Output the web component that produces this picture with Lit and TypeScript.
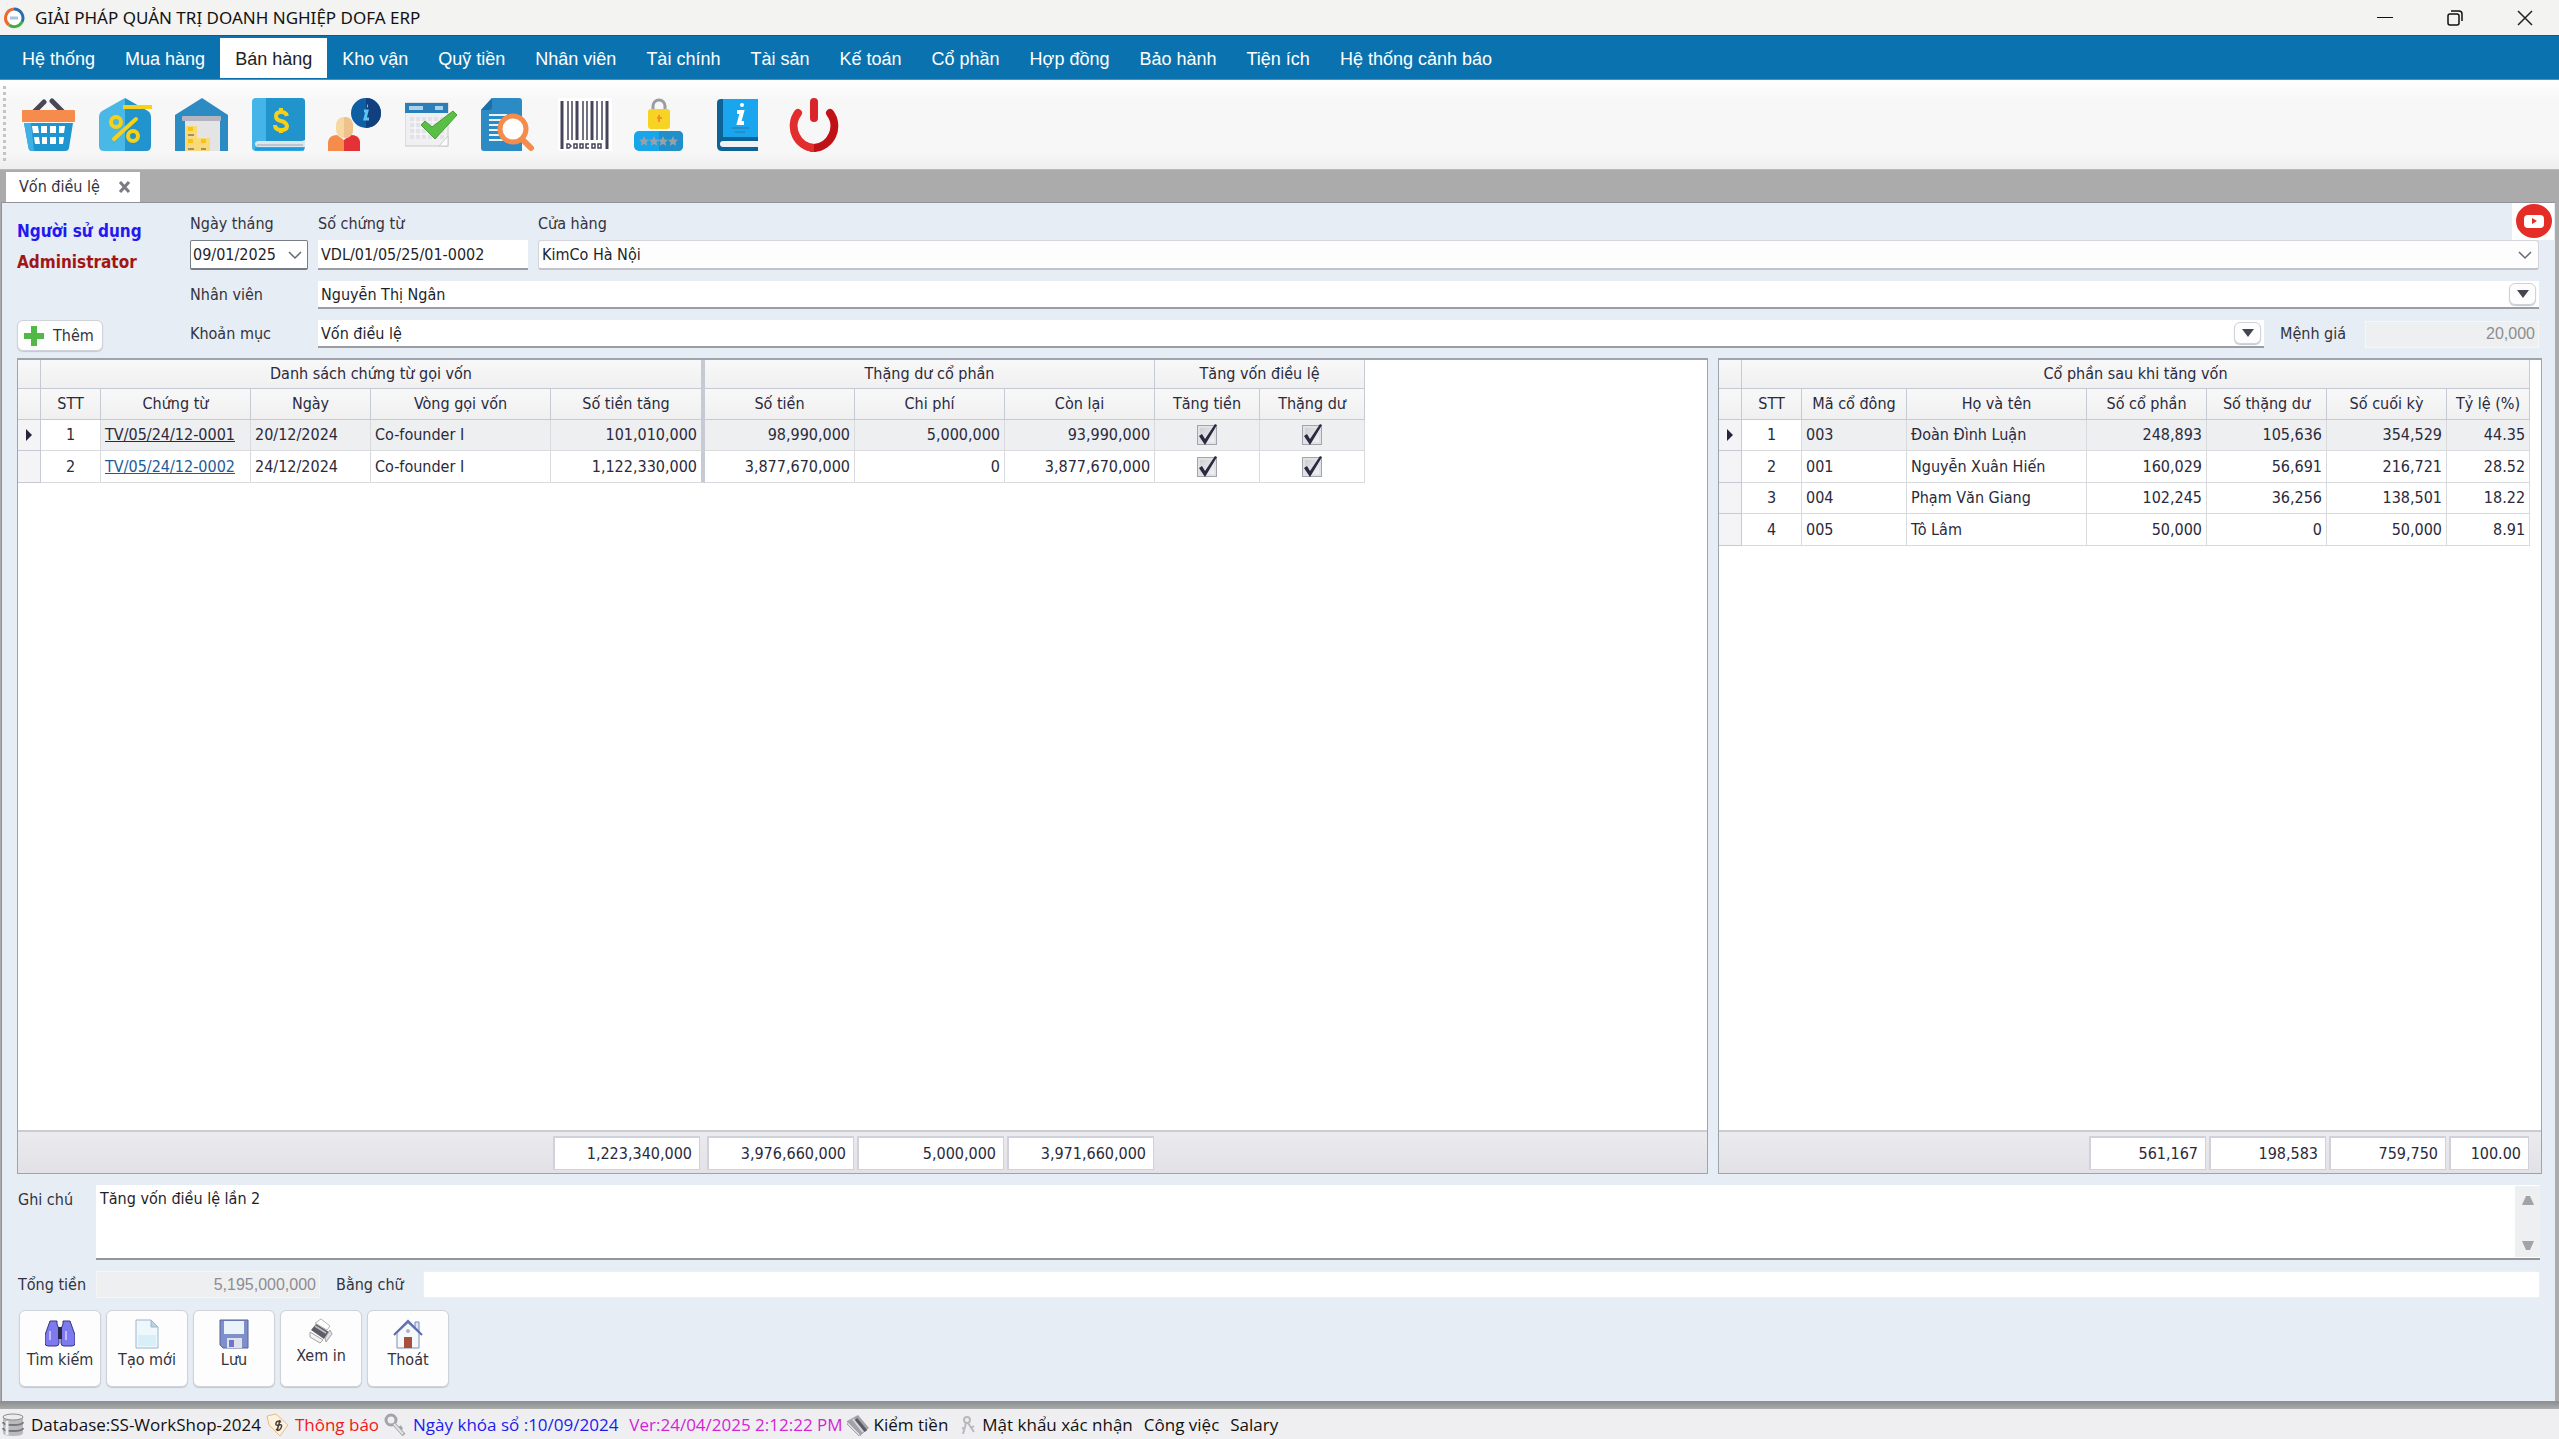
import { LitElement, html, css, svg, nothing } from "lit";
import { customElement } from "lit/decorators.js";
import { classMap } from "lit/directives/class-map.js";

/* ---------- toolbar icons, each on a 54 x 54 canvas ---------- */

const star = (x: number) => svg`<path d="M0-5 1.5-1.6 5-1.2 2.4 1.2 3.2 4.8 0 3-3.2 4.8-2.4 1.2-5-1.2-1.5-1.6z" transform="translate(${x} 43)" fill="#98a0aa"/>`;

const tools = [
  {
    name: "Bán hàng",
    art: svg`
      <path d="M22 4 12 14M30 3l11 11" stroke="#4b4558" stroke-width="5" stroke-linecap="round"/>
      <path d="M2 25h49l-4 25q-.500 3-4 3H10q-3 0-3.500-3z" fill="#1f95d0"/>
      <path d="M2 25h7l3 28h-2q-3 0-3.500-3z" fill="#3fb0e4"/>
      <rect y="12" width="53" height="12" rx="1" fill="#f58c4b"/>
      <path d="M10 28h6l1 7h-6zM19 28h6v7h-6zM28 28h6v7h-6zM37 28h6l-1 7h-5zM12 39h5l1 7h-5zM20 39h5v7h-5zM28 39h6v7h-6zM37 39h5l-1 7h-4z" fill="#fff"/>`,
  },
  {
    name: "Khuyến mại",
    art: svg`
      <path d="M26 0v53H5q-5 0-5-5V18q0-3 3-5z" fill="#4ab8e6"/>
      <path d="M26 0l23 13q3 2 3 5v30q0 5-5 5H26z" fill="#2194cd"/>
      <path d="M24 9h29" stroke="#f7d117" stroke-width="4"/>
      <g fill="none" stroke="#f7d117" stroke-width="4" stroke-linecap="round">
        <circle cx="17" cy="24" r="5"/><circle cx="34" cy="38" r="5"/><path d="M37 21 15 41"/>
      </g>`,
  },
  {
    name: "Kho",
    art: svg`
      <path d="M0 17 27 0l26 17v36H0z" fill="#2d8bc4"/>
      <rect x="10" y="22" width="35" height="31" fill="#e4e4e4"/>
      <rect x="7" y="18" width="39" height="5" rx="1" fill="#b4b5c0"/>
      <path d="M10 28h12v12h13v13H10z" fill="#f9d97a"/>
      <path d="M13 29h5v4h-5zM13 41h5v4h-5zM26 41h5v4h-5z" fill="#f7c211"/>
      <path d="M13 37h6M13 51h6M26 51h5" stroke="#a08f72" stroke-width="2"/>`,
  },
  {
    name: "Sổ quỹ",
    art: svg`
      <rect width="53" height="53" rx="4" fill="#45b4e8"/>
      <path d="M14 0h35q4 0 4 4v39H14z" fill="#2194cb"/>
      <path d="M53 42v7H7q-4 0-4-3t4-3h43z" fill="#dfe5ec"/>
      <path d="M5 47h46" stroke="#b9c6d4" stroke-width="2"/>
      <path d="M3 51h49" stroke="#1a9cdc" stroke-width="3"/>
      <path d="M35 18q-1-4-6-4t-5 4q0 4 5 5t6 5q0 4-6 4t-6-5M29 10v5M29 31v4" fill="none" stroke="#f7d117" stroke-width="4"/>`,
  },
  {
    name: "Khách hàng",
    art: svg`
      <circle cx="38" cy="15" r="15" fill="#0e5ea4"/>
      <path d="M38 0a15 15 0 0 1 0 30z" fill="#12407f"/>
      <path d="M36 13h3l-2 8h4M39 8h1" fill="none" stroke="#5fc4ef" stroke-width="3"/>
      <path d="M0 53V44q1-7 9-7l7 5 7-5q8 0 9 7v9z" fill="#f58c4b"/>
      <path d="M16 42l7-5q8 0 9 7v9H16z" fill="#e43136"/>
      <rect x="8" y="19" width="17" height="21" rx="8" fill="#f6d8a4"/>
      <path d="M16 19q9 0 9 9v4q0 8-9 8z" fill="#eec28a"/>`,
  },
  {
    name: "Lịch",
    art: svg`
      <rect x="0" y="5" width="43" height="43" fill="#f0f0f3" stroke="#c9c9d0"/>
      <path d="M0 5h43v10H0z" fill="#2a7fb8"/>
      <path d="M4 10h14M30 10h8" stroke="#a8d2ec" stroke-width="4"/>
      <path d="M5 19h34v22H5z" fill="#e2e2e8"/>
      <path d="M10 19v22M16 19v22M22 19v22M28 19v22M34 19v22M5 24h34M5 30h34M5 36h34" stroke="#fff"/>
      <path d="M34 48l9-10v10z" fill="#fff" stroke="#c9c9d0"/>
      <path d="M16 27l4-4 7 6L48 13l4 4-22 24z" fill="#5abf45" stroke="#4a9d3c"/>`,
  },
  {
    name: "Tra cứu",
    art: svg`
      <path d="M11 0h27q3 0 3 3v50H3q-3 0-3-3V12z" fill="#2c8bc4"/>
      <path d="M11 0v9q0 3-3 3H0z" fill="#1d6fa8"/>
      <path d="M8 17h18M8 22h12M8 27h10M8 32h10M8 37h10M8 42h18" stroke="#e9f3fb" stroke-width="2"/>
      <path d="M41 41l9 9" stroke="#f58c4b" stroke-width="6" stroke-linecap="round"/>
      <circle cx="32" cy="31" r="13" fill="#fff" stroke="#f58c4b" stroke-width="5"/>`,
  },
  {
    name: "Mã vạch",
    art: svg`
      <path d="M0 0h54v53H0z" fill="#fff"/>
      <path d="M4 3v48M49 3v48" stroke="#46445a" stroke-width="3"/>
      <path d="M19 3v39M34 3v39" stroke="#46445a" stroke-width="3"/>
      <path d="M10 3v39M14 3v39M25 3v39M29 3v39M39 3v39M44 3v39" stroke="#46445a" stroke-width="1.500"/>
      <path d="M9 46h2l2 2-2 2H9zM16 46h3v4h-3zM22 46h3v4h-3zM31 46h-3v4h3M34 46h3v4h-3zM40 46h3v4h-3z" fill="none" stroke="#46445a" stroke-width="1.500"/>`,
  },
  {
    name: "Mật khẩu",
    art: svg`
      <path d="M19 12V8a6 6 0 0 1 12 0v4" fill="none" stroke="#9b9ca3" stroke-width="3"/>
      <rect x="14" y="11" width="22" height="20" rx="3" fill="#f7d424"/>
      <path d="M25 17v7M23 20h5" stroke="#f58c2b" stroke-width="2"/>
      <rect y="33" width="49" height="20" rx="5" fill="#19a5ea"/>
      <path d="M25 33h19q5 0 5 5v10q0 5-5 5H25z" fill="#2190ca"/>
      ${star(10)}${star(20)}${star(29)}${star(39)}`,
  },
  {
    name: "Hướng dẫn",
    art: svg`
      <path d="M10 1h37v52H11q-5 0-5-5V5q0-4 4-4z" fill="#0d6296"/>
      <path d="M12 1h35v38H12z" fill="#1aa6ef"/>
      <path d="M47 43v6H12q-3 0-3-3t3-3z" fill="#eef2f6"/>
      <circle cx="31" cy="7" r="2" fill="#fff"/>
      <path d="M26 14h5l-3 11h5" fill="none" stroke="#fff" stroke-width="4"/>
      <path d="M21 30h17M24 34h10" stroke="#2a78a8" stroke-width="1"/>`,
  },
  {
    name: "Thoát",
    art: svg`
      <path d="M11 15a22 22 0 0 0 16 35" fill="none" stroke="#e32c2c" stroke-width="8" stroke-linecap="round"/>
      <path d="M43 15a22 22 0 0 1-16 35" fill="none" stroke="#c01216" stroke-width="8" stroke-linecap="round"/>
      <path d="M23 50h4" stroke="#e32c2c" stroke-width="8"/>
      <path d="M27 4v16" stroke="#d8242a" stroke-width="8" stroke-linecap="round"/>`,
  },
];

const actions = [
  {
    name: "Tìm kiếm",
    art: svg`<path d="M5 2h7v3l2 5v14q0 3-3 3H3q-3 0-3-3V16zM25 2h-7v3l-2 5v14q0 3 3 3h8q3 0 3-3V16z" fill="#7d79ee" stroke="#38357c"/><path d="M13 8h4v12h-4z" fill="#2b2947"/><path d="M5 12v9M21 12v9" stroke="#c3b8ff" stroke-width="2"/>`,
  },
  {
    name: "Tạo mới",
    art: svg`<path d="M4 1h15l7 7v21H4z" fill="#eef8fc" stroke="#9cb6cd"/><path d="M6 16h18v11H6z" fill="#d8eff7"/><path d="M19 1v7h7z" fill="#b9d4e6" stroke="#9cb6cd"/>`,
  },
  {
    name: "Lưu",
    art: svg`<path d="M1 1h28v28H4l-3-3z" fill="#7f8fc9" stroke="#55629c"/><path d="M5 2h20v13H5z" fill="#eaf3fb"/><path d="M8 19h15v10H8z" fill="#dfe1ea"/><path d="M10 21h5v7h-5z" fill="#6a76d0"/>`,
  },
  {
    name: "Xem in",
    raised: true,
    art: svg`<path d="M9 7l6-4 9 7-3 4z" fill="#fff" stroke="#b4b4b4"/><path d="M5 14l5-6 13 8-5 7z" fill="#5c5c66"/><path d="M9 10l11 7" stroke="#b9b9c0" stroke-width="2"/><path d="M4 16l13 8-3 3-10-6z" fill="#f4f4f4" stroke="#a2a2a2"/><path d="M19 22l5-8 2 4-6 8z" fill="#e0e0e4" stroke="#a2a2a2"/>`,
  },
  {
    name: "Thoát",
    art: svg`<path d="M22 3h4v9h-4z" fill="#dfe4f2" stroke="#7b86b4"/><path d="M4 14 15 4l11 10v15H4z" fill="#f6f8fc" stroke="#7d8cbb"/><path d="M1 16 15 2l14 14" fill="none" stroke="#5b6db0" stroke-width="2"/><path d="M11 18h8v11h-8z" fill="#a8503c"/><circle cx="15" cy="12" r="2" fill="#aab2cc"/>`,
  },
];

const icons = {
  logo: svg`<circle cx="11" cy="11" r="9" fill="#fff"/><g fill="none" stroke-width="3"><path d="M11 2a9 9 0 0 1 8 13" stroke="#2b6cb0"/><path d="M19 15a9 9 0 0 1-13 3" stroke="#3fae49"/><path d="M6 18A9 9 0 0 1 11 2" stroke="#ee6a2c"/></g><path d="M7 11h8" stroke="#a9c3dc" stroke-width="3"/>`,
  db: svg`<path d="M1 4v16q0 3 10 3t10-3V4z" fill="#b9babd"/><path d="M1 9q0 3 10 3t10-3M1 15q0 3 10 3t10-3" fill="none" stroke="#77787c" stroke-width="2"/><ellipse cx="11" cy="4" rx="10" ry="3" fill="#ececee" stroke="#8b8c90"/><path d="M5 8v14" stroke="#efeff0" stroke-width="3"/>`,
  tag: svg`<path d="M1 3 10 1l12 11-8 11L3 12z" fill="#fdf2e0" stroke="#e0bd8c"/><path d="M15 9q-4-2-5 1t3 2 2 3-5 1M14 7l-3 11" fill="none" stroke="#4a3c34" stroke-width="1.500"/>`,
  key: svg`<circle cx="7" cy="7" r="5" fill="none" stroke="#a3a4a8" stroke-width="3"/><path d="M10 11l10 11M15 16l3-2" stroke="#a3a4a8" stroke-width="4"/><path d="M10 11l9 10" stroke="#e4e5e8" stroke-width="2"/>`,
  money: svg`<path d="M0 7 11 1l11 13-9 8z" fill="#a2a2aa"/><path d="M6 5l10 13" stroke="#d8d8dc" stroke-width="2"/><path d="M9 5l10 12" stroke="#5a5a66" stroke-width="3"/><path d="M0 7l13 13v3L0 10z" fill="#dcdce0" stroke="#a2a2a8"/>`,
  ring: svg`<g fill="none" stroke="#b8b9bd" stroke-width="2"><circle cx="8" cy="4" r="3"/><path d="M7 7 4 18M6 13l-3-1M9 7l6 9M12 12l3-2"/></g>`,
};

const icon = (art: unknown, size: number) => html`<svg width=${size} height=${size} viewBox="0 0 ${size} ${size}" aria-hidden="true">${art}</svg>`;
const chevron = html`<svg class="chevron" width="14" height="10" viewBox="0 0 14 10" aria-hidden="true"><path d="M1 2l6 6 6-6" fill="none" stroke="#666a72" stroke-width="1.500"/></svg>`;
const caret = html`<svg width="12" height="8" viewBox="0 0 12 8" aria-hidden="true"><path d="M0 0h12L6 8z" fill="#454552"/></svg>`;
const marker = html`<svg width="7" height="12" viewBox="0 0 7 12" aria-hidden="true"><path d="M0 0 6 6 0 12z" fill="#26243a"/></svg>`;

const menu = ["Hệ thống", "Mua hàng", "Bán hàng", "Kho vận", "Quỹ tiền", "Nhân viên", "Tài chính", "Tài sản", "Kế toán", "Cổ phần", "Hợp đồng", "Bảo hành", "Tiện ích", "Hệ thống cảnh báo"];

const calls = [
  ["1", "TV/05/24/12-0001", "20/12/2024", "Co-founder I", "101,010,000", "98,990,000", "5,000,000", "93,990,000"],
  ["2", "TV/05/24/12-0002", "24/12/2024", "Co-founder I", "1,122,330,000", "3,877,670,000", "0", "3,877,670,000"],
];

const holders = [
  ["1", "003", "Đoàn Đình Luận", "248,893", "105,636", "354,529", "44.35"],
  ["2", "001", "Nguyễn Xuân Hiến", "160,029", "56,691", "216,721", "28.52"],
  ["3", "004", "Phạm Văn Giang", "102,245", "36,256", "138,501", "18.22"],
  ["4", "005", "Tô Lâm", "50,000", "0", "50,000", "8.91"],
];

const shared = css`
  * { box-sizing: border-box; }
  svg { display: block; flex: none; }
  button, input, select, textarea {
    font: inherit; color: inherit; margin: 0; padding: 0; border: 0; border-radius: 0;
    background: none; min-width: 0; appearance: none; outline: 0;
  }
  a { color: inherit; text-decoration: none; }
`;

@customElement("data-grids")
class DataGrids extends LitElement {
  static styles = [shared, css`
    :host { display: flex; flex: 1; gap: 10px; line-height: 20px; color: #2a2a3c; }
    .panel { display: flex; flex-direction: column; background: #fff; border: 1px solid #9fa3b1; border-top-width: 2px; min-width: 0; }
    .calls { flex: 1; }
    .holders { flex: 0 0 824px; }
    table { border-collapse: separate; border-spacing: 0; table-layout: fixed; width: 0; }
    .c23 { width: 23px; } .c60 { width: 60px; } .c83 { width: 83px; } .c105 { width: 105px; }
    .c120 { width: 120px; } .c150 { width: 150px; } .c154 { width: 154px; } .c180 { width: 180px; }
    th { font-weight: 400; background: linear-gradient(#f8f8f8, #f0f0f1); border: solid #c6cad5; border-width: 0 1px 1px 0; padding: 0; height: 31px; }
    thead tr:first-child th { height: 29px; }
    td { height: 31px; padding: 0 4px; border: solid #d9dade; border-width: 0 1px 1px 0; white-space: nowrap; }
    tbody tr:nth-child(even) td { height: 32px; }
    .current td { background: #eeeff1; }
    td.mark { background: #f4f4f6; padding: 0 0 0 8px; border-color: #c6cad5; }
    .current td.seq { background: #fff; }
    .seq { text-align: center; }
    .num { text-align: right; }
    th.thick, td.thick { border-right: 4px solid #c6cad5; }
    a { text-decoration: underline; color: #1c5c9c; }
    .current a { color: #2a2a3c; }
    .tick { display: grid; width: 24px; margin: 0 auto; place-items: center; }
    .tick > * { grid-area: 1 / 1; }
    .tick input { width: 20px; height: 20px; border: 1px solid #a2a4ae; background: linear-gradient(135deg, #c9cad0, #f7f7f8); box-shadow: inset 0 0 0 2px #e1e2e6; }
    .tick svg { pointer-events: none; }
    .sums { display: flex; height: 43px; margin-top: auto; padding: 4px 0; background: linear-gradient(#ebebee, #e2e1e6); border-top: 2px solid #cbccd3; }
    .sums output { height: 34px; margin: 0 1px 0 2px; padding: 0 7px; line-height: 32px; text-align: right; background: #fff; border: 2px solid #d0d1da; border-width: 2px 1px 1px 2px; }
    .sums .s4 { width: 4px; }
    .sums .o150 { width: 147px; } .sums .o120 { width: 117px; } .sums .o83 { width: 80px; }
    .w533 { width: 533px; } .w368 { width: 368px; }
  `];

  private check(label: string) {
    return html`<span class="tick"><input type="checkbox" checked aria-label=${label}><svg width="24" height="24" viewBox="0 0 24 24"><path d="M4 13l3-2 3 5L20 1l2 1-12 20z" fill="#2a2940"/></svg></span>`;
  }

  render() {
    return html`
      <section class="panel calls">
        <table>
          <colgroup><col class="c23"><col class="c60"><col class="c150"><col class="c120"><col class="c180"><col class="c154"><col class="c150"><col class="c150"><col class="c150"><col class="c105"><col class="c105"></colgroup>
          <thead>
            <tr><th></th><th colspan="5" class="thick">Danh sách chứng từ gọi vốn</th><th colspan="3">Thặng dư cổ phần</th><th colspan="2">Tăng vốn điều lệ</th></tr>
            <tr><th></th><th>STT</th><th>Chứng từ</th><th>Ngày</th><th>Vòng gọi vốn</th><th class="thick">Số tiền tăng</th><th>Số tiền</th><th>Chi phí</th><th>Còn lại</th><th>Tăng tiền</th><th>Thặng dư</th></tr>
          </thead>
          <tbody>
            ${calls.map((r, i) => html`<tr class=${classMap({ current: i === 0 })}>
              <td class="mark">${i === 0 ? marker : nothing}</td><td class="seq">${r[0]}</td><td><a href="#">${r[1]}</a></td><td>${r[2]}</td><td>${r[3]}</td>
              <td class="num thick">${r[4]}</td><td class="num">${r[5]}</td><td class="num">${r[6]}</td><td class="num">${r[7]}</td>
              <td>${this.check("Tăng tiền")}</td><td>${this.check("Thặng dư")}</td></tr>`)}
          </tbody>
        </table>
        <div class="sums"><span class="w533"></span><output class="o150">1,223,340,000</output><span class="s4"></span><output class="o150">3,976,660,000</output><output class="o150">5,000,000</output><output class="o150">3,971,660,000</output></div>
      </section>
      <section class="panel holders">
        <table>
          <colgroup><col class="c23"><col class="c60"><col class="c105"><col class="c180"><col class="c120"><col class="c120"><col class="c120"><col class="c83"></colgroup>
          <thead>
            <tr><th></th><th colspan="7">Cổ phần sau khi tăng vốn</th></tr>
            <tr><th></th><th>STT</th><th>Mã cổ đông</th><th>Họ và tên</th><th>Số cổ phần</th><th>Số thặng dư</th><th>Số cuối kỳ</th><th>Tỷ lệ (%)</th></tr>
          </thead>
          <tbody>
            ${holders.map((r, i) => html`<tr class=${classMap({ current: i === 0 })}>
              <td class="mark">${i === 0 ? marker : nothing}</td><td class="seq">${r[0]}</td><td>${r[1]}</td><td>${r[2]}</td>
              ${r.slice(3).map((n) => html`<td class="num">${n}</td>`)}</tr>`)}
          </tbody>
        </table>
        <div class="sums"><span class="w368"></span><output class="o120">561,167</output><output class="o120">198,583</output><output class="o120">759,750</output><output class="o83">100.00</output></div>
      </section>`;
  }
}

@customElement("app-root")
class AppRoot extends LitElement {
  static styles = [shared, css`
    :host { display: flex; flex-direction: column; min-height: 100vh; background: #ababab; color: #33333d;
      font: 16px/20px "DejaVu Sans Condensed", "Noto Sans", sans-serif; }

    .title { display: flex; align-items: center; height: 35px; padding: 0 26px 0 3px; background: #f3f3f2; color: #111; font: 17px/24px "Noto Sans", sans-serif; }
    .title h1 { flex: 1; margin: 0 0 0 10px; font: inherit; }
    .title .win { display: flex; gap: 54px; }
    .title button { width: 16px; height: 16px; }

    .menu { display: flex; align-items: stretch; height: 45px; padding: 2px 0 2px 7px; background: #0a73af; border-top: 1px solid #1c5583; border-bottom: 1px solid #4b93bf; color: #fff; font: 18px/42px "Liberation Sans", sans-serif; }
    .menu a { padding: 0 15px; height: 40px; white-space: nowrap; }
    .menu a.on { background: #fff; color: #222; }

    .tools { display: flex; align-items: center; gap: 16px; height: 90px; padding: 0 3px; background: linear-gradient(#fff, #f7f7f7 22%, #f7f7f7 80%, #eeeeef); border-bottom: 1px solid #b8b8bd; }
    .grip { width: 3px; height: 77px; background: repeating-linear-gradient(#c3c3ca 0 3px, transparent 3px 6px); }
    .tools ul { display: flex; justify-content: space-between; width: 819px; margin: 0; padding: 0; list-style: none; }
    .tools button { display: block; height: 54px; }

    .tabs { height: 32px; padding: 2px 0 0 6px; }
    .tab { display: flex; align-items: center; justify-content: space-between; width: 134px; height: 30px; padding: 0 8px 0 13px; background: #fff; }

    .page { position: relative; flex: 1; display: flex; flex-direction: column; margin: 0 4px 0 1px; padding: 0 13px 14px 15px; background: #e6edf4; border: 1px solid #8f929b; border-width: 1px 0 0 1px; }
    .tube { position: absolute; top: 0; right: 1px; width: 42px; height: 37px; background: #fff; }
    .form { display: flex; margin-bottom: 7px; }
    .user { display: flex; flex-direction: column; width: 173px; padding-top: 13px; font-weight: bold; font-size: 17px; line-height: 31px; }
    .who { color: #2418f2; } .name { color: #a31515; }
    .add { display: flex; align-items: center; gap: 9px; width: 86px; height: 31px; margin-top: auto; padding: 0 6px; font-weight: 400; font-size: 16px; line-height: 20px; }
    .btn { background: #fdfdfd; border: 1px solid #cfd2d9; border-radius: 6px; box-shadow: 0 1px 1px #c4c8cf; }
    .fields { flex: 1; display: flex; flex-direction: column; gap: 11px; padding: 9px 3px 3px 0; }
    .row { display: flex; align-items: center; }
    .head { gap: 10px; }
    .stack { display: flex; flex-direction: column; gap: 4px; }
    .stack label { height: 24px; line-height: 24px; }
    .grow { flex: 1; min-width: 0; }
    .lab { width: 128px; }
    .box { display: flex; align-items: center; height: 30px; background: #fff; border-bottom: 2px solid #9b9da3; color: #1f1f2b; }
    .box input, .box select { flex: 1; height: 28px; padding: 0 3px; }
    .row > .box { height: 28px; }
    .row > .box input { height: 26px; }
    .box .drop { display: grid; place-items: center; width: 27px; height: 22px; margin: 0 3px 0 1px; }
    .date { width: 118px; border: 1px solid #777c86; border-bottom-width: 2px; border-radius: 2px; padding-right: 5px; }
    .date input { width: 90px; padding: 0 2px; }
    .doc { width: 210px; }
    .shop { display: grid; background: #fdfdfd; border: 1px solid #d3d5da; border-bottom: 2px solid #c1c3c8; border-radius: 3px; }
    .shop > * { grid-area: 1 / 1; }
    .shop .chevron { justify-self: end; margin-right: 6px; pointer-events: none; }
    .price { width: 101px; padding-left: 16px; }
    .dim { height: 27px; padding: 0 3px; background: #eeeff0; border: 1px solid #f8f6f2; color: #8c8d90; text-align: right; font: 16px/20px "Liberation Sans", sans-serif; }
    .value { width: 174px; }

    .note { display: flex; margin-top: 11px; padding-right: 2px; }
    .note label { width: 79px; padding: 5px 0 0 1px; }
    .memo { flex: 1; display: flex; height: 75px; background: #fff; border-bottom: 2px solid #94969b; color: #1f1f2b; }
    .memo textarea { flex: 1; padding: 4px; resize: none; overflow: hidden; }
    .scroll { display: flex; flex-direction: column; justify-content: space-between; align-items: center; width: 25px; margin: 1px 0; padding: 10px 0 7px; background: #eeeff1; }
    .total { display: flex; align-items: center; margin-top: 11px; padding-right: 2px; }
    .total .l1 { width: 79px; padding-left: 1px; }
    .total .sum { width: 224px; }
    .total .l2 { width: 103px; padding-left: 16px; }
    .total .words { flex: 1; height: 27px; padding: 0 4px; background: #fff; border: 1px solid #eeeff0; }
    .acts { display: flex; gap: 5px; margin: 12px 0 0 2px; }
    .act { display: flex; flex-direction: column; align-items: center; gap: 1px; width: 82px; height: 77px; padding-top: 8px; white-space: nowrap; }
    .act.raised { padding-top: 5px; gap: 0; }
    .shade { height: 8px; background: linear-gradient(#8d8f93, #ababab); border-top: 1px solid #8c9097; }

    .status { display: flex; align-items: center; height: 30px; padding: 2px 2px 0; background: #efeff1; color: #111; font: 17px/24px "Open Sans", sans-serif; white-space: nowrap; gap: 11px; }
    .status span { display: flex; align-items: center; gap: 5px; }
    .status .g { gap: 5px; }
    .status .g2 { gap: 4px; }
    .red { color: #f01818; } .blue { color: #1c1cf0; } .pink { color: #d424d4; }
  `];

  render() {
    return html`
      <header class="title">
        ${icon(icons.logo, 22)}
        <h1>GIẢI PHÁP QUẢN TRỊ DOANH NGHIỆP DOFA ERP</h1>
        <div class="win">
          <button aria-label="Thu nhỏ"><svg width="16" height="16" viewBox="0 0 16 16"><path d="M0 7.500h16" stroke="#111"/></svg></button>
          <button aria-label="Khôi phục"><svg width="16" height="16" viewBox="0 0 16 16"><g fill="none" stroke="#111" stroke-width="1.500"><rect x="1" y="4" width="11" height="11" rx="2"/><path d="M4 1h8q3 0 3 3v7"/></g></svg></button>
          <button aria-label="Đóng"><svg width="16" height="16" viewBox="0 0 16 16"><path d="M1 1l14 14M15 1 1 15" stroke="#222" stroke-width="1.500"/></svg></button>
        </div>
      </header>
      <nav class="menu">${menu.map((m) => html`<a href="#" class=${classMap({ on: m === "Bán hàng" })}>${m}</a>`)}</nav>
      <div class="tools">
        <span class="grip"></span>
        <ul>${tools.map((t) => html`<li><button aria-label=${t.name}>${icon(t.art, 54)}</button></li>`)}</ul>
      </div>
      <div class="tabs"><div class="tab"><span>Vốn điều lệ</span><button aria-label="Đóng thẻ"><svg width="15" height="13" viewBox="0 0 15 13"><path d="M3 1l9 10M12 1 3 11" stroke="#7b7c82" stroke-width="3"/></svg></button></div></div>

      <main class="page">
        <button class="tube" aria-label="YouTube"><svg width="42" height="37" viewBox="0 0 42 37"><ellipse cx="22" cy="18" rx="18" ry="17" fill="#e52d27"/><rect x="12" y="12" width="20" height="13" rx="4" fill="#fff"/><path d="M20 15v6l5-3z" fill="#e52d27"/></svg></button>
        <section class="form">
          <div class="user">
            <span class="who">Người sử dụng</span><span class="name">Administrator</span>
            <button class="add btn"><svg width="20" height="20" viewBox="0 0 20 20"><path d="M7 0h6v7h7v6h-7v7H7v-7H0V7h7z" fill="#52b848"/></svg>Thêm</button>
          </div>
          <div class="fields">
            <div class="row head">
              <div class="stack"><label for="date">Ngày tháng</label><div class="box date"><input id="date" value="09/01/2025">${chevron}</div></div>
              <div class="stack"><label for="doc">Số chứng từ</label><div class="box doc"><input id="doc" value="VDL/01/05/25/01-0002"></div></div>
              <div class="stack grow"><label for="shop">Cửa hàng</label><div class="box shop"><select id="shop"><option>KimCo Hà Nội</option></select>${chevron}</div></div>
            </div>
            <div class="row"><label class="lab" for="staff">Nhân viên</label><div class="box grow"><input id="staff" value="Nguyễn Thị Ngân"><button class="drop btn" aria-label="Chọn nhân viên">${caret}</button></div></div>
            <div class="row"><label class="lab" for="item">Khoản mục</label><div class="box grow"><input id="item" value="Vốn điều lệ"><button class="drop btn" aria-label="Chọn khoản mục">${caret}</button></div>
              <label class="price" for="value">Mệnh giá</label><input id="value" class="dim value" value="20,000" readonly></div>
          </div>
        </section>

        <data-grids></data-grids>

        <div class="note"><label for="note">Ghi chú</label><div class="memo"><textarea id="note" .value=${"Tăng vốn điều lệ lần 2"}></textarea>
          <div class="scroll"><svg width="12" height="9" viewBox="0 0 12 9"><path d="M0 9h12L8 0H4z" fill="#a2a3a7"/></svg><svg width="12" height="9" viewBox="0 0 12 9"><path d="M0 0h12L8 9H4z" fill="#a2a3a7"/></svg></div></div></div>
        <div class="total"><label class="l1" for="sum">Tổng tiền</label><input id="sum" class="dim sum" value="5,195,000,000" readonly><label class="l2" for="words">Bằng chữ</label><input id="words" class="words"></div>
        <div class="acts">${actions.map((a) => html`<button class=${classMap({ act: true, btn: true, raised: !!a.raised })}>${icon(a.art, 30)}${a.name}</button>`)}</div>
      </main>
      <div class="shade"></div>
      <footer class="status">
        <div class="g row"><span>${icon(icons.db, 24)}Database:SS-WorkShop-2024</span><span class="red">${icon(icons.tag, 24)}Thông báo</span><span class="blue">${icon(icons.key, 24)}Ngày khóa sổ :10/09/2024</span></div>
        <div class="g2 row"><span class="pink">Ver:24/04/2025 2:12:22 PM</span><span>${icon(icons.money, 22)}Kiểm tiền</span></div>
        <span>${icon(icons.ring, 18)}Mật khẩu xác nhận</span><span>Công việc</span><span>Salary</span>
      </footer>`;
  }
}
